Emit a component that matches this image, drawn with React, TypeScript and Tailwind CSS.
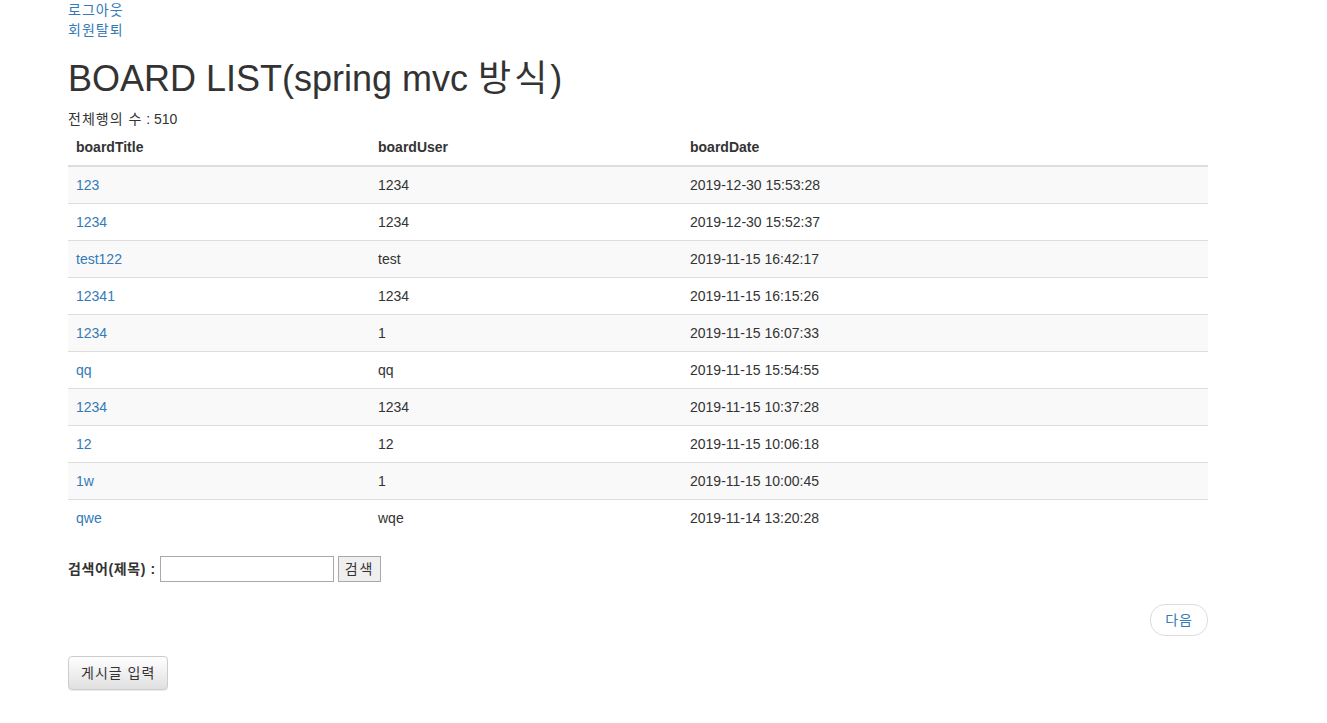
import React from 'react';

type Row = { title: string; user: string; date: string };

const rows: Row[] = [
  { title: '123', user: '1234', date: '2019-12-30 15:53:28' },
  { title: '1234', user: '1234', date: '2019-12-30 15:52:37' },
  { title: 'test122', user: 'test', date: '2019-11-15 16:42:17' },
  { title: '12341', user: '1234', date: '2019-11-15 16:15:26' },
  { title: '1234', user: '1', date: '2019-11-15 16:07:33' },
  { title: 'qq', user: 'qq', date: '2019-11-15 15:54:55' },
  { title: '1234', user: '1234', date: '2019-11-15 10:37:28' },
  { title: '12', user: '12', date: '2019-11-15 10:06:18' },
  { title: '1w', user: '1', date: '2019-11-15 10:00:45' },
  { title: 'qwe', user: 'wqe', date: '2019-11-14 13:20:28' },
];

function App() {
  return (
    <div
      className="min-h-[723px] bg-white text-[14px] leading-[20px] text-[#333]"
      style={{ fontFamily: '"Liberation Sans", Arial, "Noto Sans CJK KR", sans-serif' }}
    >
      <div className="w-[1140px] ml-[68px]">
        <div className="flex flex-col items-start">
          <a href="#" className="text-[#337ab7] tracking-[1px]">로그아웃</a>
          <a href="#" className="text-[#337ab7] tracking-[1px]">회원탈퇴</a>
        </div>

        <h1 className="mt-[19px] mb-[10px] text-[36px] leading-[39.6px] font-normal">
          BOARD LIST(spring mvc <span className="tracking-[3px]">방식</span>)
        </h1>
        <div>
          <span className="tracking-[1px]">전체행의 수</span> : 510
        </div>

        <table className="w-full border-collapse mb-[20px]">
          <thead>
            <tr>
              <th className="w-[302px] text-left font-bold px-[8px] py-[8px] border-b-2 border-[#ddd]">boardTitle</th>
              <th className="w-[312px] text-left font-bold px-[8px] py-[8px] border-b-2 border-[#ddd]">boardUser</th>
              <th className="text-left font-bold px-[8px] py-[8px] border-b-2 border-[#ddd]">boardDate</th>
            </tr>
          </thead>
          <tbody>
            {rows.map((r, i) => (
              <tr key={i} className={i % 2 === 0 ? 'bg-[#f9f9f9]' : ''}>
                <td className={'px-[8px] py-[8px] ' + (i > 0 ? 'border-t border-[#ddd]' : '')}>
                  <a href="#" className="text-[#337ab7]">{r.title}</a>
                </td>
                <td className={'px-[8px] py-[8px] ' + (i > 0 ? 'border-t border-[#ddd]' : '')}>{r.user}</td>
                <td className={'px-[8px] py-[8px] ' + (i > 0 ? 'border-t border-[#ddd]' : '')}>{r.date}</td>
              </tr>
            ))}
          </tbody>
        </table>

        <form className="flex items-center h-[26px]" onSubmit={(e) => e.preventDefault()}>
          <label className="font-bold text-[14px] tracking-[0.6px] mr-[4px]">검색어(제목) :</label>
          <input
            type="text"
            className="w-[174px] h-[26px] border border-[#a9a9a9] px-[2px] bg-white"
          />
          <button
            type="submit"
            className="ml-[4px] h-[26px] px-[6px] border border-[#a9a9a9] bg-[#efefef] text-[14px] tracking-[2px] text-[#333]"
          >
            검색
          </button>
        </form>

        <div className="flex justify-end mt-[22px]">
          <a
            href="#"
            className="px-[14px] py-[5px] border border-[#ddd] rounded-[15px] bg-white text-[#337ab7] tracking-[1px] leading-[20px]"
          >
            다음
          </a>
        </div>

        <div className="mt-[20px]">
          <button
            type="button"
            className="h-[34px] px-[12px] border border-[#ccc] rounded-[4px] bg-gradient-to-b from-white to-[#e0e0e0] shadow-[0_1px_0_rgba(0,0,0,0.075)] tracking-[1px] text-[#333]"
          >
            게시글 입력
          </button>
        </div>
      </div>
    </div>
  );
}

export default App;
